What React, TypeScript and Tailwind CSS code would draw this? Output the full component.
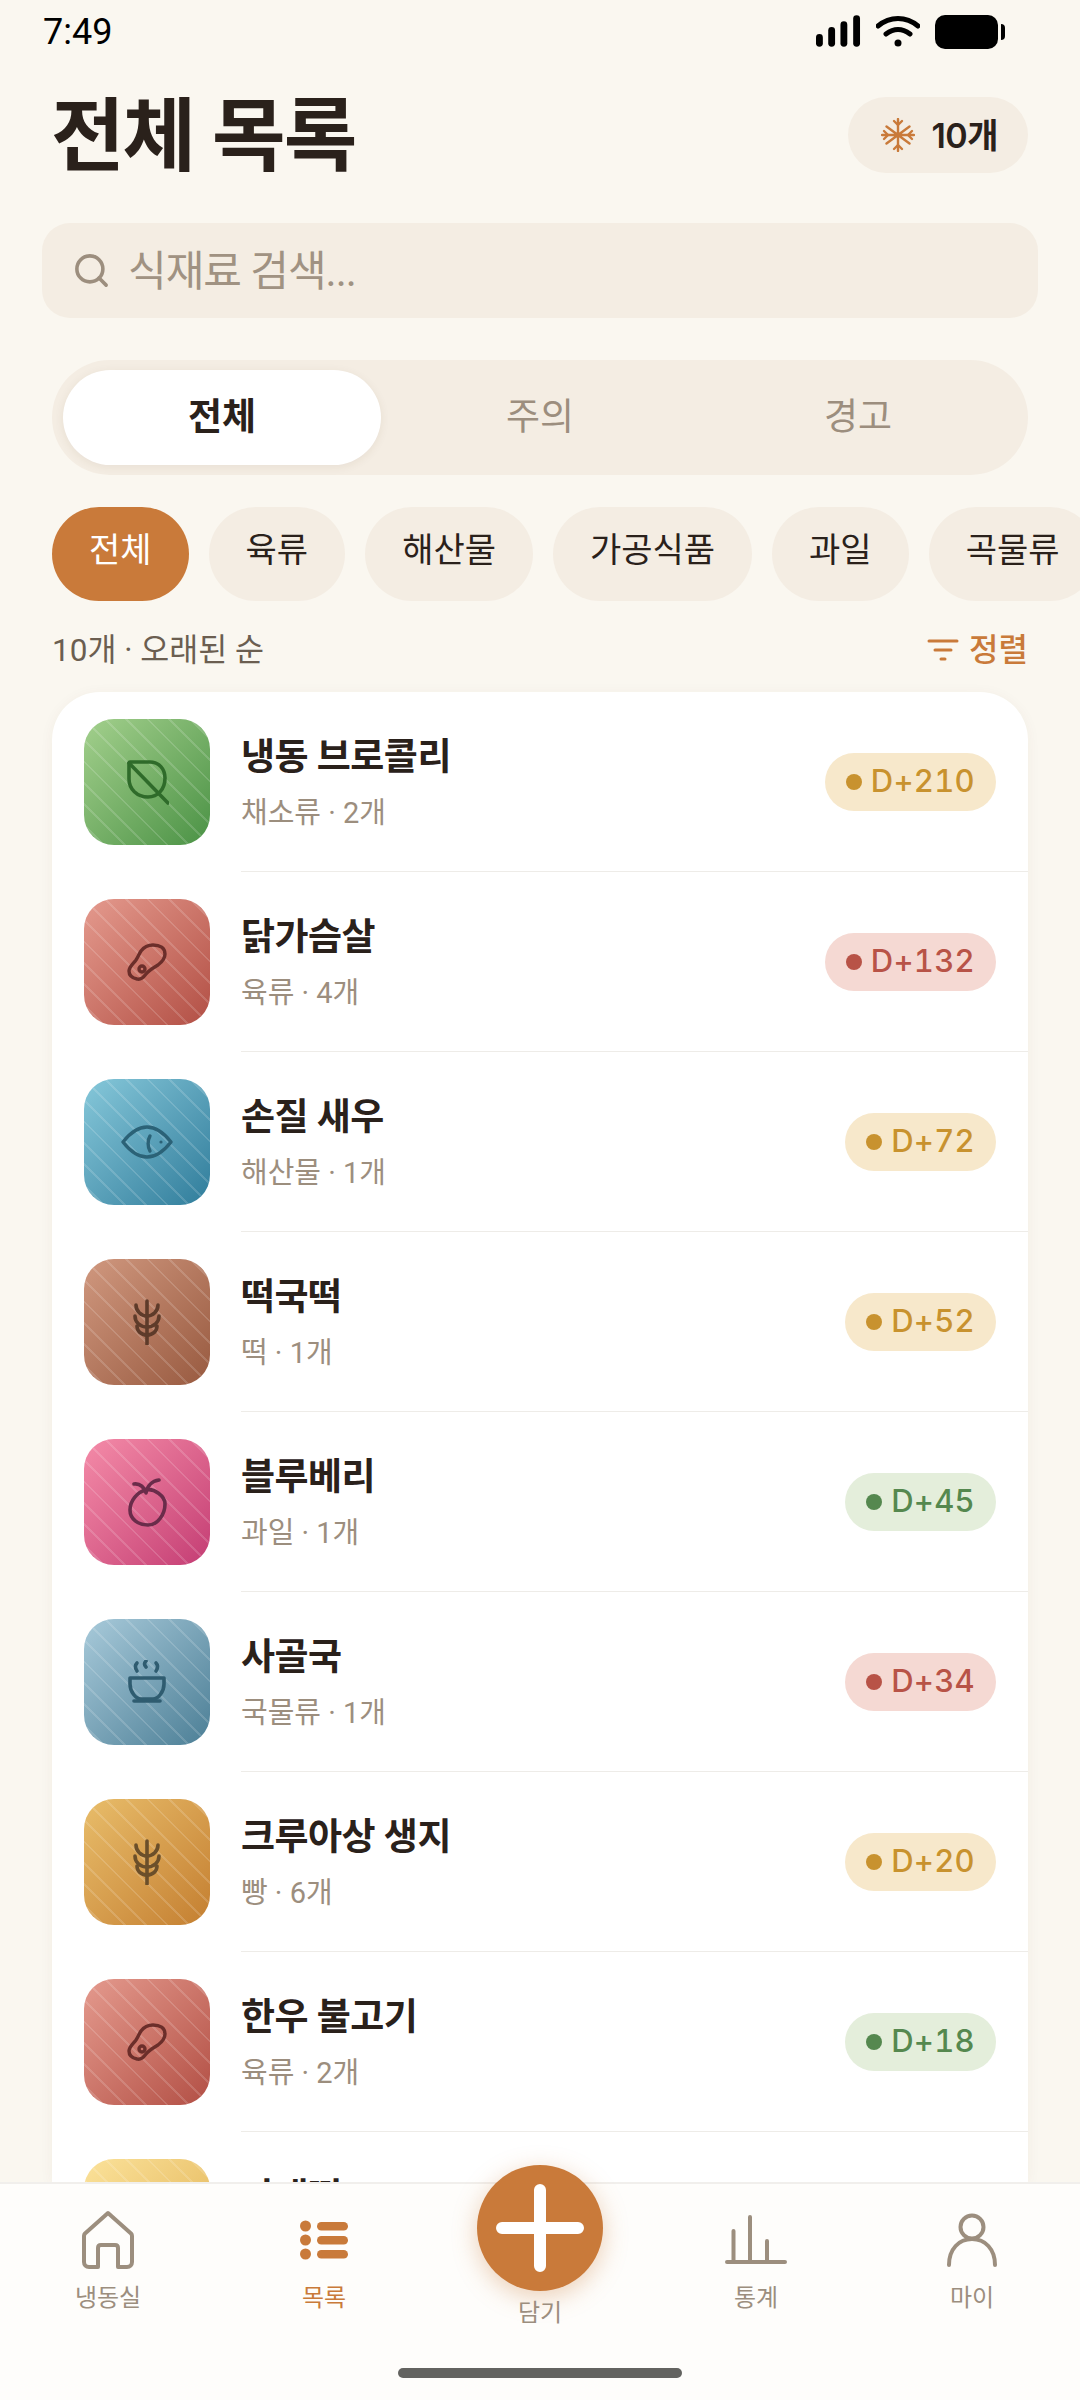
import { Search } from "lucide-react";
import type { ReactNode } from "react";

const categories = [
  { label: "전체", active: true },
  { label: "육류" },
  { label: "해산물" },
  { label: "가공식품" },
  { label: "과일" },
  { label: "곡물류" },
];

const thumbClasses = {
  green: "bg-gradient-to-br from-[#A3D08D] to-[#4A9245]",
  red: "bg-gradient-to-br from-[#E49A8E] to-[#B24F45]",
  teal: "bg-gradient-to-br from-[#86C8DA] to-[#2F7D9B]",
  brown: "bg-gradient-to-br from-[#D0987F] to-[#985A40]",
  pink: "bg-gradient-to-br from-[#F48BA8] to-[#C43C74]",
  slate: "bg-gradient-to-br from-[#A8CADA] to-[#4C7F96]",
  amber: "bg-gradient-to-br from-[#E8BD6A] to-[#C47F30]",
  yellow: "bg-gradient-to-br from-[#FBE29A] to-[#E0B04E]",
};

const badgeClasses = {
  warn: { box: "bg-[#F7E8CB] text-[#C8922F]", dot: "bg-[#C8922F]" },
  danger: { box: "bg-[#F5D9D3] text-[#B85347]", dot: "bg-[#B85347]" },
  ok: { box: "bg-[#E4EEDB] text-[#55884F]", dot: "bg-[#55884F]" },
};

function Leaf() {
  return (
    <svg width="44" height="48" viewBox="0 0 44 48" fill="none" stroke="#2F6B2A" strokeWidth="3.6" strokeLinecap="round" strokeLinejoin="round">
      <path d="M5 4h20c9 0 15 7 15 16 0 11-7 19-17 19-11 0-19-8-19-18V7c0-2 0-3 1-3z" />
      <path d="M4 5l39 40" />
    </svg>
  );
}

function Drumstick() {
  return (
    <svg width="40" height="38" viewBox="0 0 40 38" fill="none" stroke="#6B2E2A" strokeWidth="3.4" strokeLinecap="round" strokeLinejoin="round">
      <path d="M14 8C17 4 21 2 26 2C33 2 38 5 38 11C38 16 35 19 31 22C26 25 22 27 19 31C16 35 13 37 10 36C5 35 2 32 2 28C2 24 6 21 9 17C11 14 12 11 14 8Z" />
      <circle cx="15" cy="26" r="3" />
    </svg>
  );
}

function Fish() {
  return (
    <svg width="52" height="36" viewBox="0 0 52 36" fill="none" stroke="#2B6277" strokeWidth="3.4" strokeLinecap="round" strokeLinejoin="round">
      <path d="M2 18C9 9 17 3 26 3C35 3 43 9 50 18C43 27 35 33 26 33C17 33 9 27 2 18Z" />
      <path d="M29 12C26.5 16 26.5 23 29 27" />
      <circle cx="40" cy="18" r="1.6" fill="#2B6277" stroke="none" />
    </svg>
  );
}

function Wheat({ color }: { color: string }) {
  return (
    <svg width="28" height="46" viewBox="0 0 28 46" fill="none" stroke={color} strokeWidth="3.6" strokeLinecap="round" strokeLinejoin="round">
      <path d="M14 2v43" />
      <path d="M3 6c0 6 5 11 11 11 6 0 11-5 11-11" />
      <path d="M2 17c0 6 5 11 12 11s12-5 12-11" />
      <path d="M4 27c0 5 4 9 10 9s10-4 10-9" />
    </svg>
  );
}

function Fruit() {
  return (
    <svg width="39" height="49" viewBox="0 0 39 49" fill="none" stroke="#6A2C4A" strokeWidth="3.6" strokeLinecap="round" strokeLinejoin="round">
      <path d="M18 12C26 10 37 18 37 26C37 36 30 47 20 47C10 47 2 41 2 32C2 23 9 14 18 12Z" />
      <path d="M6 6C12 5 17 10 18 15C19 8 24 3 31 2" />
    </svg>
  );
}

function Soup() {
  return (
    <svg width="38" height="44" viewBox="0 0 38 44" fill="none" stroke="#2F5C70" strokeWidth="3.6" strokeLinecap="round" strokeLinejoin="round">
      <path d="M2 18h34v6c0 8-6 15-11 15H13C8 39 2 32 2 24v-6z" />
      <path d="M6 41h26" />
      <path d="M9 3c-2 2-2 5 0 8" />
      <path d="M18 1c-2 2-2 4 0 6" />
      <path d="M28 3c2 2 2 5 0 8" />
    </svg>
  );
}

function Snowflake() {
  return (
    <svg width="34" height="34" viewBox="0 0 34 34" fill="none" stroke="#C97A3A" strokeWidth="2.4" strokeLinecap="round" strokeLinejoin="round">
      <path d="M17 1v32M1 17h32M5.5 8.5l23 17M28.5 8.5l-23 17" />
      <path d="M13 3l4 4 4-4M13 31l4-4 4 4" />
      <path d="M3 13l4 4-4 4M31 13l-4 4 4 4" />
    </svg>
  );
}

const items: {
  name: string;
  sub: string;
  thumb: keyof typeof thumbClasses;
  icon: ReactNode;
  dday: string;
  tone: keyof typeof badgeClasses;
}[] = [
  { name: "냉동 브로콜리", sub: "채소류 · 2개", thumb: "green", icon: <Leaf />, dday: "D+210", tone: "warn" },
  { name: "닭가슴살", sub: "육류 · 4개", thumb: "red", icon: <Drumstick />, dday: "D+132", tone: "danger" },
  { name: "손질 새우", sub: "해산물 · 1개", thumb: "teal", icon: <Fish />, dday: "D+72", tone: "warn" },
  { name: "떡국떡", sub: "떡 · 1개", thumb: "brown", icon: <Wheat color="#5E3B2A" />, dday: "D+52", tone: "warn" },
  { name: "블루베리", sub: "과일 · 1개", thumb: "pink", icon: <Fruit />, dday: "D+45", tone: "ok" },
  { name: "사골국", sub: "국물류 · 1개", thumb: "slate", icon: <Soup />, dday: "D+34", tone: "danger" },
  { name: "크루아상 생지", sub: "빵 · 6개", thumb: "amber", icon: <Wheat color="#6B4F2A" />, dday: "D+20", tone: "warn" },
  { name: "한우 불고기", sub: "육류 · 2개", thumb: "red", icon: <Drumstick />, dday: "D+18", tone: "ok" },
  { name: "가래떡", sub: "떡 · 1개", thumb: "yellow", icon: null, dday: "D+12", tone: "warn" },
];

function StatusBar() {
  return (
    <div className="flex h-[60px] shrink-0 items-center justify-between pl-[43px] pr-[75px] pt-1">
      <span className="text-[36px] leading-none text-black">7:49</span>
      <div className="flex items-center gap-[15px]">
        <svg width="45" height="34" viewBox="0 0 46 34" fill="#000">
          <rect x="0" y="19" width="7" height="13" rx="3.5" />
          <rect x="12.5" y="12" width="7" height="20" rx="3.5" />
          <rect x="25" y="6" width="7" height="26" rx="3.5" />
          <rect x="38" y="0" width="7" height="32" rx="3.5" />
        </svg>
        <svg width="44" height="34" viewBox="0 0 44 34" fill="none" stroke="#000" strokeWidth="5" strokeLinecap="round">
          <path d="M2 11C14 1 30 1 42 11" />
          <path d="M10 19c8-6 16-6 24 0" />
          <circle cx="22" cy="28" r="3.5" fill="#000" stroke="none" />
        </svg>
        <div className="flex items-center gap-[3px]">
          <div className="h-[34px] w-[63px] rounded-[10px] bg-black" />
          <div className="h-[16px] w-[4px] rounded-r bg-black" />
        </div>
      </div>
    </div>
  );
}

function Row({ item }: { item: (typeof items)[number] }) {
  const badge = badgeClasses[item.tone];
  return (
    <div className="flex h-[180px] items-center pl-[32px]">
      <div className={`relative flex h-[126px] w-[126px] shrink-0 items-center justify-center overflow-hidden rounded-[30px] ${thumbClasses[item.thumb]}`}>
        <span className="absolute inset-0 bg-[repeating-linear-gradient(45deg,transparent,transparent_13px,rgba(255,255,255,0.15)_13px,rgba(255,255,255,0.15)_15px)]" />
        <span className="relative flex">{item.icon}</span>
      </div>
      <div className="ml-[31px] flex h-full flex-1 items-center justify-between border-b border-[#EEECE8] pr-[32px]">
        <div className="flex flex-col pt-[2px]">
          <span className="text-[37px] leading-[54px] font-semibold tracking-[-0.5px] text-[#2A211B]">{item.name}</span>
          <span className="mt-[7px] text-[29px] leading-[42px] text-[#9C8E7E]">{item.sub}</span>
        </div>
        <div className={`flex h-[58px] items-center gap-[9px] rounded-full px-[21px] font-['Inter',sans-serif] text-[31px] font-medium tabular-nums tracking-[0.3px] ${badge.box}`}>
          <span className={`h-[16px] w-[16px] rounded-full ${badge.dot}`} />
          {item.dday}
        </div>
      </div>
    </div>
  );
}

function NavItem({ label, active, children }: { label: string; active?: boolean; children: ReactNode }) {
  return (
    <div className="flex w-[216px] flex-col items-center">
      <div className="flex h-[60px] items-center">{children}</div>
      <span className={`mt-[10px] text-[24px] leading-[36px] ${active ? "text-[#C97A3A]" : "text-[#9C8E7E]"}`}>{label}</span>
    </div>
  );
}

export default function App() {
  return (
    <div className="flex h-[2400px] w-[1080px] flex-col overflow-hidden bg-[#FAF7F0] font-['Roboto','Noto_Sans_CJK_KR',sans-serif]">
      <StatusBar />

      <div className="mt-[37px] flex h-[76px] shrink-0 items-center justify-between pr-[52px] pl-[51px]">
        <h1 className="pt-[3px] text-[80px] leading-none font-bold tracking-[-2px] text-[#2A211B]">전체 목록</h1>
        <div className="flex h-[76px] items-center gap-[16px] rounded-full bg-[#F4EDE3] pr-[30px] pl-[33px] font-['Inter','Noto_Sans_CJK_KR',sans-serif]">
          <Snowflake />
          <span className="text-[34px] font-semibold tracking-[-0.5px] text-[#2A211B]">10개</span>
        </div>
      </div>

      <div className="mx-[42px] mt-[50px] flex h-[95px] shrink-0 items-center gap-[17px] rounded-[28px] bg-[#F4EDE3] px-[30px]">
        <Search size={39} strokeWidth={2.2} className="text-[#9C8E7E]" />
        <span className="pt-[2px] text-[42px] tracking-[-1px] text-[#A09282]">식재료 검색...</span>
      </div>

      <div className="mx-[52px] mt-[42px] flex h-[115px] shrink-0 items-center rounded-full bg-[#F4EDE3] px-[11px]">
        <div className="flex h-[95px] w-[318px] items-center justify-center rounded-full bg-white text-[37px] font-bold text-[#2A211B] shadow-[0_2px_10px_rgba(90,60,30,0.08)]">전체</div>
        <div className="flex h-[95px] w-[318px] items-center justify-center text-[37px] text-[#9C8E7E]">주의</div>
        <div className="flex h-[95px] w-[318px] items-center justify-center text-[37px] text-[#9C8E7E]">경고</div>
      </div>

      <div className="mt-[32px] flex h-[94px] shrink-0 gap-[20px] pl-[52px]">
        {categories.map((c) => (
          <div key={c.label} className={`flex h-[94px] shrink-0 items-center rounded-full px-[37px] pb-[7px] text-[34px] ${c.active ? "bg-[#C97A3A] text-white" : "bg-[#F4EDE3] text-[#2A211B]"}`}>
            {c.label}
          </div>
        ))}
      </div>

      <div className="mt-[26px] flex h-[46px] shrink-0 items-center justify-between px-[52px]">
        <span className="pt-[2px] text-[31.5px] text-[#6B5E50]">10개 · 오래된 순</span>
        <div className="flex items-center gap-[10px] text-[32px] font-medium text-[#C97A3A]">
          <svg width="32" height="26" viewBox="0 0 32 26" fill="none" stroke="#C97A3A" strokeWidth="3" strokeLinecap="round">
            <path d="M2 4h28M8 13h16M14 22h4" />
          </svg>
          정렬
        </div>
      </div>

      <div className="mx-[52px] mt-[19px] min-h-0 flex-1 overflow-hidden rounded-t-[48px] bg-white shadow-[0_2px_14px_rgba(90,60,30,0.05)]">
        {items.map((item) => (
          <Row key={item.name} item={item} />
        ))}
      </div>

      <div className="relative flex h-[218px] shrink-0 justify-center border-t-2 border-[#F1EFEC] bg-[#FEFDFB] pt-[26px]">
        <NavItem label="냉동실">
          <svg width="56" height="60" viewBox="0 0 56 60" fill="none" stroke="#9C8E7E" strokeWidth="4" strokeLinecap="round" strokeLinejoin="round">
            <path d="M18 57H9c-3 0-5-2-5-5V26c0-1 .5-2 1-2.500L28 3l23 20.500c.5.500 1 1.500 1 2.500v26c0 3-2 5-5 5H38V38c0-2-1-3-3-3H21c-2 0-3 1-3 3v19z" />
          </svg>
        </NavItem>
        <NavItem label="목록" active>
          <svg width="49" height="40" viewBox="0 0 49 40" fill="#C97A3A">
            <circle cx="5.500" cy="6" r="5.500" />
            <circle cx="5.500" cy="20" r="5.500" />
            <circle cx="5.500" cy="34" r="5.500" />
            <rect x="17" y="2" width="31" height="8.500" rx="4.250" />
            <rect x="17" y="16" width="31" height="8.500" rx="4.250" />
            <rect x="17" y="30" width="31" height="8.500" rx="4.250" />
          </svg>
        </NavItem>
        <div className="w-[216px]" />
        <NavItem label="통계">
          <svg width="62" height="50" viewBox="0 0 62 50" fill="none" stroke="#9C8E7E" strokeWidth="4" strokeLinecap="round">
            <path d="M2 47h58M8.500 47V16M25 47V2M42 47V26" />
          </svg>
        </NavItem>
        <NavItem label="마이">
          <svg width="52" height="54" viewBox="0 0 52 54" fill="none" stroke="#9C8E7E" strokeWidth="4" strokeLinecap="round">
            <circle cx="26" cy="14" r="11.500" />
            <path d="M3 52C3 36 13 26 26 26S49 36 49 52" />
          </svg>
        </NavItem>

        <div className="absolute top-[-19px] left-1/2 flex -translate-x-1/2 flex-col items-center">
          <div className="flex h-[126px] w-[126px] items-center justify-center rounded-full bg-[#C97A3A] shadow-[0_6px_24px_rgba(201,122,58,0.35)]">
            <svg width="88" height="88" viewBox="0 0 88 88" stroke="#fff" strokeWidth="12" strokeLinecap="round">
              <path d="M44 6v76M6 44h76" />
            </svg>
          </div>
          <span className="mt-[4px] text-[24px] leading-[36px] text-[#9C8E7E]">담기</span>
        </div>

        <div className="absolute bottom-[22px] left-1/2 h-[10px] w-[284px] -translate-x-1/2 rounded-full bg-[#636360]" />
      </div>
    </div>
  );
}
